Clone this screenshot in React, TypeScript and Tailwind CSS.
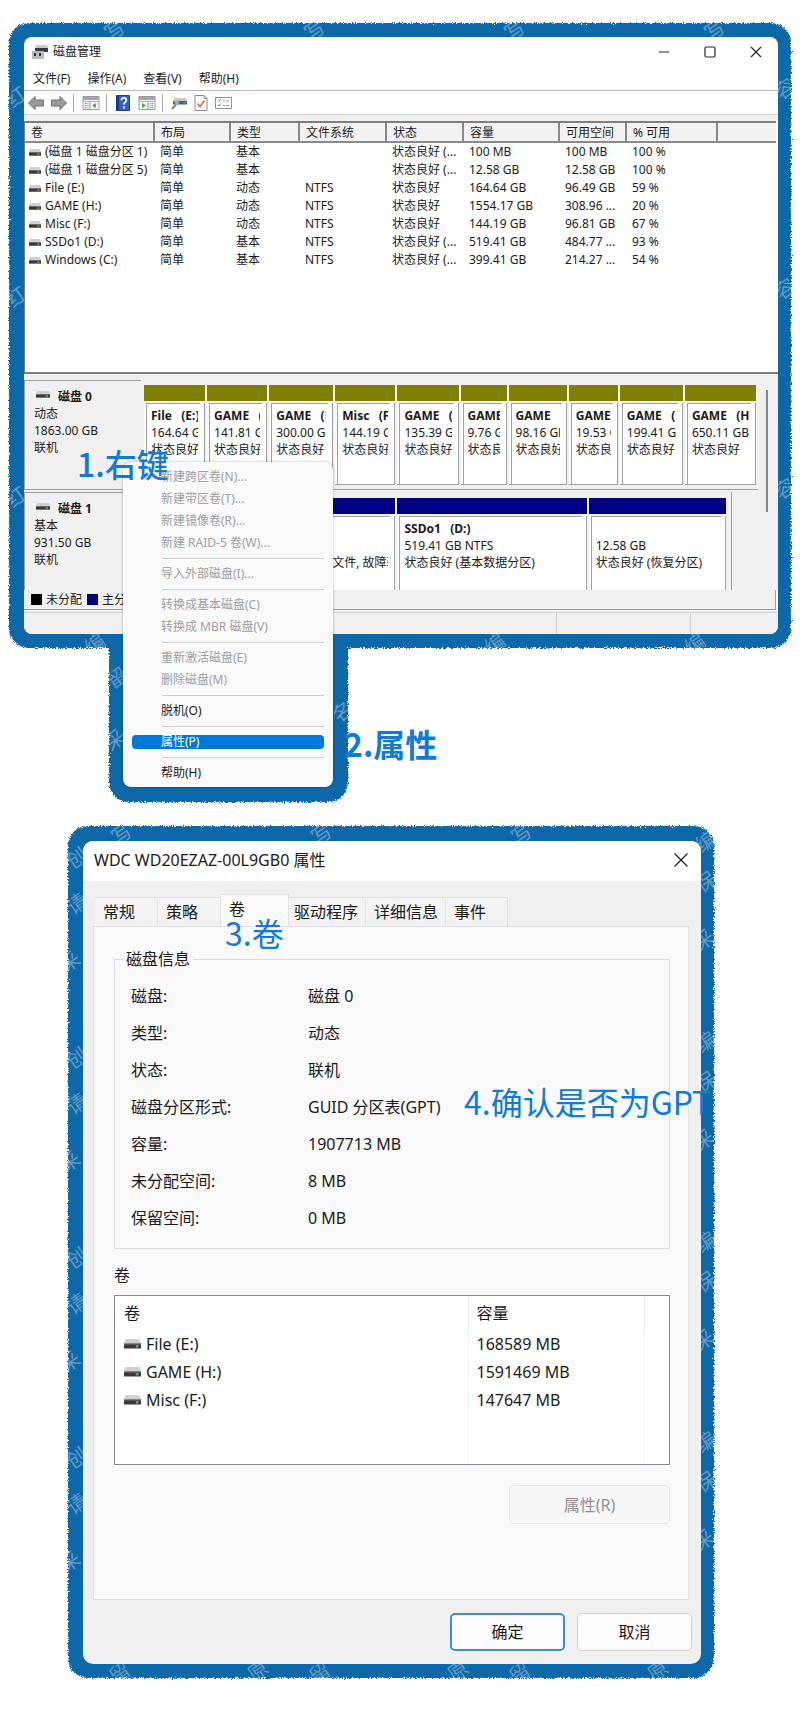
import React from "react";

const volumes = [
  { name: "(磁盘 1 磁盘分区 1)", layout: "简单", type: "基本", fs: "", status: "状态良好 (...", size: "100 MB", free: "100 MB", pct: "100 %" },
  { name: "(磁盘 1 磁盘分区 5)", layout: "简单", type: "基本", fs: "", status: "状态良好 (...", size: "12.58 GB", free: "12.58 GB", pct: "100 %" },
  { name: "File (E:)", layout: "简单", type: "动态", fs: "NTFS", status: "状态良好", size: "164.64 GB", free: "96.49 GB", pct: "59 %" },
  { name: "GAME (H:)", layout: "简单", type: "动态", fs: "NTFS", status: "状态良好", size: "1554.17 GB", free: "308.96 ...", pct: "20 %" },
  { name: "Misc (F:)", layout: "简单", type: "动态", fs: "NTFS", status: "状态良好", size: "144.19 GB", free: "96.81 GB", pct: "67 %" },
  { name: "SSDo1 (D:)", layout: "简单", type: "基本", fs: "NTFS", status: "状态良好 (...", size: "519.41 GB", free: "484.77 ...", pct: "93 %" },
  { name: "Windows (C:)", layout: "简单", type: "基本", fs: "NTFS", status: "状态良好 (...", size: "399.41 GB", free: "214.27 ...", pct: "54 %" },
];

const columns = ["卷", "布局", "类型", "文件系统", "状态", "容量", "可用空间", "% 可用", ""];

const disk0 = [
  { name: "File   (E:)", size: "164.64 GB" },
  { name: "GAME   (H:)", size: "141.81 GB" },
  { name: "GAME   (H:)", size: "300.00 GB" },
  { name: "Misc   (F:)", size: "144.19 GB" },
  { name: "GAME   (H:)", size: "135.39 GB" },
  { name: "GAME   (H:)", size: "9.76 GB" },
  { name: "GAME   (H:)", size: "98.16 GB" },
  { name: "GAME   (H:)", size: "19.53 GB" },
  { name: "GAME   (H:)", size: "199.41 GB" },
  { name: "GAME   (H:)", size: "650.11 GB" },
];

const disk1 = [
  { name: "", size: "", status: "" },
  { name: "", size: "", status: "状态良好 (启动, 页面文件, 故障转储)" },
  { name: "SSDo1   (D:)", size: "519.41 GB NTFS", status: "状态良好 (基本数据分区)" },
  { name: "", size: "12.58 GB", status: "状态良好 (恢复分区)" },
];

const menuGroups = [
  { items: ["新建跨区卷(N)...", "新建带区卷(T)...", "新建镜像卷(R)...", "新建 RAID-5 卷(W)..."], disabled: true },
  { items: ["导入外部磁盘(I)..."], disabled: true },
  { items: ["转换成基本磁盘(C)", "转换成 MBR 磁盘(V)"], disabled: true },
  { items: ["重新激活磁盘(E)", "删除磁盘(M)"], disabled: true },
  { items: ["脱机(O)"], disabled: false },
  { items: ["属性(P)"], disabled: false },
  { items: ["帮助(H)"], disabled: false },
];

const diskInfo = [
  ["磁盘:", "磁盘 0"],
  ["类型:", "动态"],
  ["状态:", "联机"],
  ["磁盘分区形式:", "GUID 分区表(GPT)"],
  ["容量:", "1907713 MB"],
  ["未分配空间:", "8 MB"],
  ["保留空间:", "0 MB"],
];

const diskVolumes = [
  ["File (E:)", "168589 MB"],
  ["GAME (H:)", "1591469 MB"],
  ["Misc (F:)", "147647 MB"],
];

const tabs = [
  { name: "常规", cls: "w-[63px] h-[29px]" },
  { name: "策略", cls: "w-[63px] h-[29px]" },
  { name: "卷", cls: "w-[68px] h-8 pb-1" },
  { name: "驱动程序", cls: "w-[77px] h-[29px]" },
  { name: "详细信息", cls: "w-20 h-[29px]" },
  { name: "事件", cls: "w-[62px] h-[29px]" },
];

type Mark = { t: string; x: number; y: number };

// the watermark tiles every 200px
const repeat = (marks: Mark[], dx: number, dy: number, n: number) =>
  Array.from({ length: n }, (_, i) => marks.map((m) => ({ ...m, x: m.x + dx * i, y: m.y + dy * i }))).flat();

const managerMarks = [
  ...repeat([{ t: "写", x: 96, y: -5 }], 200, 0, 4),
  ...repeat([{ t: "红", x: -2, y: 62 }], 0, 200, 3),
  ...repeat([{ t: "容", x: 766, y: 54 }], 0, 200, 3),
  ...repeat([{ t: "编", x: 76, y: 609 }], 200, 0, 4),
];

const menuMarks = [
  { t: "留", x: -2, y: 66 },
  { t: "采", x: -4, y: 128 },
  { t: "名", x: 224, y: 100 },
];

const dialogMarks = [
  ...repeat([{ t: "写", x: 44, y: -4 }], 200, 0, 3),
  ...repeat([{ t: "创", x: -1, y: 20 }, { t: "请", x: -1, y: 66 }, { t: "采", x: -8, y: 124 }], 0, 200, 4),
  ...repeat([{ t: "编", x: 628, y: 4 }, { t: "保", x: 628, y: 44 }, { t: "采", x: 626, y: 102 }], 0, 200, 4),
  ...repeat([{ t: "留", x: 42, y: 835 }, { t: "原", x: 180, y: 833 }], 200, 0, 3),
];

function Frame({ marks }: { marks: Mark[] }) {
  return (
    <div className="absolute inset-0" aria-hidden="true">
      <div className="absolute inset-0 rounded-[20px] bg-[#0b67a9] [filter:url(#rough)]" />
      <div className="absolute inset-0 overflow-hidden rounded-[20px]">
        {marks.map((m, i) => (
          <span key={i} className="absolute -rotate-[35deg] text-xl leading-6 whitespace-nowrap text-white/35" style={{ left: m.x, top: m.y }}>
            {m.t}
          </span>
        ))}
      </div>
    </div>
  );
}

function DriveIcon({ className = "", led = "#8a9a20" }) {
  return (
    <svg className={className} viewBox="0 0 18 10" preserveAspectRatio="none" aria-hidden="true">
      <path d="M1.500 0h15L18 4.500H0z" fill="#d0d0d4" />
      <path d="M0 4.500h18v5H0z" fill="#38383c" />
      <path d="M0 4.500h18v1H0z" fill="#77777b" />
      <path d="M12.500 6h3v2.500h-3z" fill={led} />
    </svg>
  );
}

function ArrowIcon({ flip = false }) {
  return (
    <svg className={flip ? "size-4 -scale-x-100" : "size-4"} viewBox="0 0 16 16" aria-hidden="true">
      <path d="M.5 8L7 1.500V5h8.500v6H7v3.500z" fill="#9a9a9a" stroke="#6c6c6c" />
    </svg>
  );
}

function PanelIcon({ flip = false }) {
  return (
    <svg className="h-4 w-[18px]" viewBox="0 0 18 16" aria-hidden="true">
      <path d="M1 1.500h16v13H1z" fill="#f5f5f5" stroke="#9a9a9a" />
      <path d="M1 2h16v3H1z" fill="#a3a7ab" />
      <path d="M1 6.500h16" stroke="#b5b5b5" />
      <g transform={flip ? "translate(18 0) scale(-1 1)" : undefined}>
        <path d="M8 7v7" stroke="#9a9a9a" />
        <path d="M3 8.500h3.500M3 10.500h3.500M3 12.500h3.500" stroke="#5b8ec4" strokeDasharray="1 .6" />
        <path d="M14 8v5l-4-2.500z" fill="#4caf3c" />
      </g>
    </svg>
  );
}

function Toolbar() {
  const btn = "flex items-center justify-center";
  return (
    <div className="flex h-6 items-center border-t border-[#b9b9b9] pl-1" role="toolbar">
      <button className={btn} aria-label="后退"><ArrowIcon /></button>
      <button className={`${btn} ml-[7px]`} aria-label="前进"><ArrowIcon flip /></button>
      <span className="mx-[6px] h-[18px] w-px bg-[#a8a8a8]" />
      <button className={`${btn} ml-[2px]`} aria-label="显示控制台树"><PanelIcon /></button>
      <span className="mx-[6px] h-[18px] w-px bg-[#a8a8a8]" />
      <button className={`${btn} ml-[3px]`} aria-label="帮助">
        <svg className="h-4 w-[14px]" viewBox="0 0 14 16" aria-hidden="true">
          <path d="M.5 .5h13v15H.5z" fill="#2f62c4" stroke="#1c3f8c" />
          <path d="M1 1h2v14H1z" fill="#173a86" />
          <path d="M5.500 5.200c0-3 4.800-3 4.800 0 0 2-2.400 2-2.400 4.300" fill="none" stroke="#fff" strokeWidth="1.800" />
          <path d="M7 11.500h2v2H7z" fill="#fff" />
        </svg>
      </button>
      <button className={`${btn} ml-2`} aria-label="显示操作窗格"><PanelIcon flip /></button>
      <span className="mx-[6px] h-[18px] w-px bg-[#a8a8a8]" />
      <button className={`${btn} ml-[2px]`} aria-label="重新扫描磁盘">
        <svg className="size-4" viewBox="0 0 16 16" aria-hidden="true">
          <path d="M3 3h12l1 3H2z" fill="#c9c9c9" />
          <path d="M2 6h14v3.500H2z" fill="#5a5a5e" />
          <path d="M12.500 7H15v1.500h-2.500z" fill="#8a9a20" />
          <path d="M3 6l4-1 1.500 3L5 10.500z" fill="#8fb0d8" />
          <path d="M5 9.500L1 14" stroke="#7089a8" strokeWidth="2" />
        </svg>
      </button>
      <button className={`${btn} ml-[7px]`} aria-label="属性">
        <svg className="h-4 w-[14px]" viewBox="0 0 14 16" aria-hidden="true">
          <path d="M1 .5h9l3 3v12H1z" fill="#fff" stroke="#8a8a8a" />
          <path d="M10 .5v3h3" fill="none" stroke="#8a8a8a" />
          <path d="M3.500 8.500L6 11.500l4.500-6" fill="none" stroke="#d27a3c" strokeWidth="1.800" />
        </svg>
      </button>
      <button className={`${btn} ml-[7px]`} aria-label="列表">
        <svg className="h-4 w-[17px]" viewBox="0 0 17 16" aria-hidden="true">
          <path d="M.5 2.500h16v11H.5z" fill="#fff" stroke="#8f8f8f" />
          <path d="M3 5.500l1 1 2-2.500M3 10l1 1 2-2.500" fill="none" stroke="#3f7fc4" />
          <path d="M8 6h2M11 6h3M8 10.500h2M11 10.500h3" stroke="#9a9a9a" />
        </svg>
      </button>
    </div>
  );
}

function Partition({ name, size, status = "状态良好", bar, short = false }: { name: string; size: string; status?: string; bar: string; short?: boolean }) {
  return (
    <div className="min-w-0 pr-[2px]">
      <div className={`h-4 ${bar}`} />
      <div className={`mt-[2px] border-r border-[#a0a0a0] bg-white pr-1 pl-[2px] ${short ? "h-[76px]" : "h-[82px] border-b"}`}>
        <div className="h-full border-t border-l border-[#a0a0a0] pt-[3px] pr-[2px] pl-1">
          <div className="overflow-hidden leading-[17px] whitespace-pre">
            <p className="h-[17px] font-bold">{name}</p>
            <p className="h-[17px]">{size}</p>
            <p className="h-[17px]">{status}</p>
          </div>
        </div>
      </div>
    </div>
  );
}

function DiskLabel({ name, type, size }: { name: string; type: string; size: string }) {
  return (
    <div className="w-[117px] shrink-0 border-t border-l border-[#a0a0a0] pt-[7px] pl-[9px] leading-[17px]">
      <div className="flex items-center gap-2 pl-[2px]">
        <DriveIcon className="mb-1 h-[7px] w-[14px]" />
        <b>{name}</b>
      </div>
      <p>{type}</p>
      <p>{size}</p>
      <p>联机</p>
    </div>
  );
}

function DiskManager() {
  return (
    <section className="relative flex flex-col overflow-hidden rounded-lg bg-white text-xs text-[#1a1a1a]" aria-label="磁盘管理">
      <header className="flex h-[29px] items-center pl-2">
        <svg className="size-4" viewBox="0 0 16 16" aria-hidden="true">
          <path d="M4 1h11l1 3H3z" fill="#c9c9cc" />
          <path d="M3 4h13v4H3z" fill="#3a3a3e" />
          <path d="M0 7h12v8H0z" fill="#b9bcbf" />
          <path d="M2 9h2v3H2zM7 9h2v3H7z" fill="#333" />
        </svg>
        <h1 className="ml-[5px]">磁盘管理</h1>
        <div className="mr-4 ml-auto flex items-center gap-[34px]">
          <button aria-label="最小化">
            <svg className="size-3" viewBox="0 0 12 12"><path d="M1 6h10" stroke="#222" /></svg>
          </button>
          <button aria-label="最大化">
            <svg className="size-3" viewBox="0 0 12 12"><rect x="1" y="1" width="10" height="10" rx="1.500" fill="none" stroke="#222" strokeWidth="1.200" /></svg>
          </button>
          <button aria-label="关闭">
            <svg className="size-3" viewBox="0 0 12 12"><path d="M1 1l10 10M11 1L1 11" stroke="#222" strokeWidth="1.200" /></svg>
          </button>
        </div>
      </header>
      <nav className="flex h-6 items-center gap-[17px] pt-[2px] pl-[9px]">
        <button>文件(F)</button>
        <button>操作(A)</button>
        <button>查看(V)</button>
        <button>帮助(H)</button>
      </nav>
      <Toolbar />
      <div className="h-[7px] border-t border-[#d0d0d0] bg-[#f0f0f0]" />

      {/* Volume list */}
      <div className="mr-[2px] h-[251px] border-t-2 border-l border-[#7d7d7d]">
        <table className="w-full table-fixed border-collapse text-left whitespace-nowrap">
          <colgroup>
            <col className="w-[129px]" />
            <col className="w-[76px]" />
            <col className="w-[69px]" />
            <col className="w-[87px]" />
            <col className="w-[77px]" />
            <col className="w-24" />
            <col className="w-[67px]" />
            <col className="w-[91px]" />
            <col />
          </colgroup>
          <thead className="bg-[#f2f2f2]">
            <tr className="h-[19px] border-b-2 border-[#8a8a8a]">
              {columns.map((c, i) => (
                <th key={i} className="border-r-2 border-[#8a8a8a] py-0 pl-[6px] leading-[17px] font-normal last:border-r-0">{c}</th>
              ))}
            </tr>
          </thead>
          <tbody>
            {volumes.map((v) => (
              <tr key={v.name} className="h-[18px] leading-[18px]">
                <td className="py-0 pl-1">
                  <div className="flex items-center gap-1">
                    <DriveIcon className="h-[7px] w-3 shrink-0" />
                    {v.name}
                  </div>
                </td>
                <td className="py-0 pl-[6px]">{v.layout}</td>
                <td className="py-0 pl-[6px]">{v.type}</td>
                <td className="py-0 pl-[6px]">{v.fs}</td>
                <td className="py-0 pl-[6px]">{v.status}</td>
                <td className="py-0 pl-[6px]">{v.size}</td>
                <td className="py-0 pl-[6px]">{v.free}</td>
                <td className="py-0 pl-[6px]">{v.pct}</td>
                <td />
              </tr>
            ))}
          </tbody>
        </table>
      </div>

      {/* Graphical view */}
      <div className="flex bg-[#f0f0f0]">
        <div className="min-w-0 flex-1 border-t-2 border-[#7d7d7d] pt-[6px]">
          <div className="flex h-[110px] border-b border-[#a0a0a0]">
            <DiskLabel name="磁盘 0" type="动态" size="1863.00 GB" />
            <div className="ml-[3px] grid flex-1 grid-cols-[63fr_62fr_66fr_62fr_63fr_48fr_60fr_51fr_65fr_73fr] pt-[5px]">
              {disk0.map((p, i) => (
                <Partition key={i} name={p.name} size={p.size} bar="bg-[#808000]" />
              ))}
            </div>
          </div>
          <div className="flex h-[100px] pt-[2px]">
            <DiskLabel name="磁盘 1" type="基本" size="931.50 GB" />
            <div className="mr-[26px] ml-[3px] flex flex-1 border-r border-[#a0a0a0] pr-[3px]">
              <div className="grid flex-1 grid-cols-[72fr_181fr_191fr_139fr] pt-[6px]">
                {disk1.map((p, i) => (
                  <Partition key={i} name={p.name} size={p.size} status={p.status} bar="bg-[#000080]" short />
                ))}
              </div>
            </div>
          </div>
        </div>
        <div className="w-5 border-t-2 border-[#7d7d7d] pt-4 pl-2">
          <div className="h-[122px] w-[2px] bg-[#858585]" />
        </div>
      </div>
      <div className="mr-[2px] flex h-5 items-center border-r border-b border-[#a0a0a0] bg-[#f0f0f0] pl-[7px]">
        <span className="size-[11px] bg-black" />
        <span className="ml-1">未分配</span>
        <span className="ml-[5px] size-[11px] bg-[#000080]" />
        <span className="ml-1">主分区</span>
      </div>
      <footer className="flex h-6 bg-[#f0f0f0] pt-[2px]">
        <div className="flex-1 border-t border-r border-[#d2d2d2]" />
        <div className="w-[134px] border-t border-r border-[#d2d2d2]" />
        <div className="w-[87px] border-t border-[#d2d2d2]" />
      </footer>
    </section>
  );
}

function ContextMenu() {
  return (
    <div className="absolute top-[439px] left-[114px] w-[210px] rounded-lg bg-[#f9f9f9] pt-1 pb-[3px] text-xs shadow-[0_0_3px_rgba(0,0,0,0.3)]" role="menu">
      {menuGroups.map((g, gi) => (
        <div key={gi}>
          {gi > 0 && <hr className="my-1 mr-[9px] ml-[39px] border-[#cfcfcf]" />}
          {g.items.map((item) => (
            <button
              key={item}
              role="menuitem"
              disabled={g.disabled}
              className="flex h-[22px] w-full items-center px-[9px] text-left text-[#1a1a1a] disabled:text-[#a0a0a0]"
            >
              <span className={`w-full rounded-[4px] pl-[29px] leading-[14px] ${item === "属性(P)" ? "bg-[#0078d7] text-white" : ""}`}>{item}</span>
            </button>
          ))}
        </div>
      ))}
    </div>
  );
}

function PropertiesDialog() {
  return (
    <section className="relative overflow-hidden rounded-[10px] bg-[#f0f0f0] text-base text-[#1a1a1a]" aria-label="属性">
      <header className="flex h-10 items-center justify-between bg-white pr-3 pb-[2px] pl-[11px]">
        <h2>WDC WD20EZAZ-00L9GB0 属性</h2>
        <button aria-label="关闭">
          <svg className="size-4" viewBox="0 0 16 16"><path d="M1.500 1.500l13 13M14.500 1.500l-13 13" stroke="#222" strokeWidth="1.300" /></svg>
        </button>
      </header>
      <div className="pt-[13px] pr-3 pl-[10px]">
        <div className="flex items-end pl-[2px]" role="tablist">
          {tabs.map((t) => (
            <button
              key={t.name}
              role="tab"
              aria-selected={t.name === "卷"}
              className={`${t.cls} shrink-0 border-t border-r border-[#e2e2e2] bg-[#f3f3f3] pl-2 text-left leading-6 whitespace-nowrap aria-selected:bg-[#f9f9f9] nth-[4]:pl-[5px]`}
            >
              {t.name}
            </button>
          ))}
        </div>
        <div className="border border-[#e0e0e0] bg-[#f9f9f9] px-5 pt-5 pb-[75px]" role="tabpanel">
          <fieldset className="mr-[-2px] border border-[#dcdcdc] px-4 pb-[11px]">
            <legend className="ml-[-8px] px-[3px] leading-6">磁盘信息</legend>
            <dl className="grid grid-cols-[177px_1fr] pt-[7px] leading-[37px]">
              {diskInfo.map(([k, v]) => (
                <React.Fragment key={k}>
                  <dt>{k}</dt>
                  <dd>{v}</dd>
                </React.Fragment>
              ))}
            </dl>
          </fieldset>
          <h3 className="mt-[14px] leading-6">卷</h3>
          <div className="mt-2 mr-[-2px] flex h-[170px] border border-[#85888c] bg-white">
            <table className="w-full table-fixed border-collapse text-left">
              <colgroup>
                <col />
                <col className="w-44" />
                <col className="w-[25px]" />
              </colgroup>
              <thead>
                <tr className="h-[34px]">
                  <th className="border-r border-[#e6eef2] py-0 pl-[9px] font-normal">卷</th>
                  <th className="border-r border-[#e6eef2] py-0 pl-2 font-normal">容量</th>
                  <th />
                </tr>
              </thead>
              <tbody>
                {diskVolumes.map(([name, size]) => (
                  <tr key={name} className="h-7">
                    <td className="border-r border-[#eef4f7] py-0 pl-[9px]">
                      <div className="flex items-center gap-[5px]">
                        <DriveIcon className="h-[10px] w-[17px]" led="#3fae49" />
                        {name}
                      </div>
                    </td>
                    <td className="border-r border-[#eef4f7] py-0 pl-2">{size}</td>
                    <td />
                  </tr>
                ))}
                <tr>
                  <td className="border-r border-[#eef4f7]" />
                  <td className="border-r border-[#eef4f7]" />
                  <td />
                </tr>
              </tbody>
            </table>
          </div>
          <div className="mt-5 mr-[-2px] flex justify-end">
            <button disabled className="h-[39px] w-[161px] rounded-[5px] border border-[#e6e6e6] bg-[#f7f7f7] text-[#909090]">属性(R)</button>
          </div>
        </div>
      </div>
      <div className="flex justify-end gap-3 pt-[13px] pr-[9px] pb-[13px]">
        <button className="h-[38px] w-[115px] rounded-[5px] border-2 border-[#3b8ed0] bg-[#fdfdfd]">确定</button>
        <button className="h-[38px] w-[115px] rounded-[5px] border border-[#d0d0d0] bg-[#fdfdfd]">取消</button>
      </div>
    </section>
  );
}

const note = "absolute text-[32px] leading-10 whitespace-nowrap text-[#0f7bd6] font-['Noto_Sans_CJK_SC',sans-serif]";

export default function App() {
  return (
    <main className="bg-white px-[9px] pt-[23px] pb-10 font-['Noto_Sans','Noto_Sans_CJK_SC',sans-serif]">
      <svg className="absolute size-0" aria-hidden="true">
        <filter id="rough">
          <feTurbulence type="fractalNoise" baseFrequency="0.9" numOctaves="2" />
          <feDisplacementMap in="SourceGraphic" scale="5" xChannelSelector="R" yChannelSelector="G" />
        </filter>
      </svg>

      {/* Disk manager with its context menu */}
      <div className="relative pt-[14px] pr-[13px] pb-[14px] pl-[15px]">
        <Frame marks={managerMarks} />
        <div className="absolute top-[577px] left-[100px] h-[202px] w-[239px]">
          <Frame marks={menuMarks} />
        </div>
        <DiskManager />
        <ContextMenu />
        <p className={`${note} top-[420px] left-[68px] font-medium`}>1.右键</p>
        <p className={`${note} top-[700px] left-[335px] font-bold`}>2.属性</p>
      </div>

      {/* Properties dialog */}
      <div className="relative mt-[178px] mr-[77px] ml-[59px] pt-[15px] pr-[13px] pb-[14px] pl-[15px]">
        <Frame marks={dialogMarks} />
        <PropertiesDialog />
        <p className={`${note} top-[86px] left-[157px]`}>3.卷</p>
        <p className={`${note} top-[255px] left-[396px]`}>4.确认是否为GPT</p>
      </div>
    </main>
  );
}
